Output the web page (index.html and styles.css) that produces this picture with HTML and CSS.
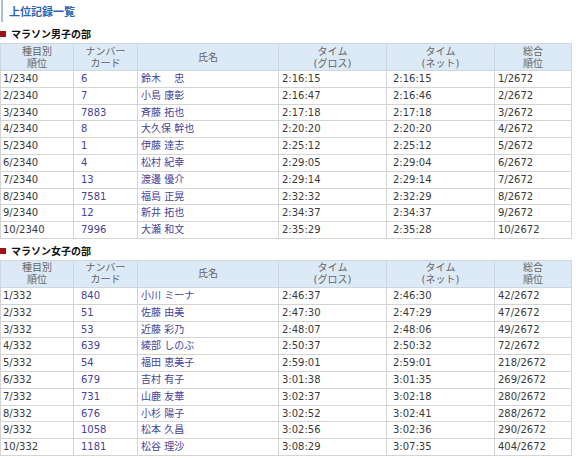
FILE: index.html
```html
<!DOCTYPE html>
<html lang="ja">
<head>
<meta charset="utf-8">
<title>上位記録一覧</title>
<link rel="stylesheet" href="styles.css">
</head>
<body>
<h1 class="page-title">上位記録一覧</h1>

<h2 class="section-title">マラソン男子の部</h2>
<table class="rank">
<colgroup><col class="c1"><col class="c2"><col class="c3"><col class="c4"><col class="c5"><col class="c6"></colgroup>
<thead>
<tr><th>種目別<br>順位</th><th>ナンバー<br>カード</th><th>氏名</th><th>タイム<br>(グロス)</th><th>タイム<br>(ネット)</th><th>総合<br>順位</th></tr>
</thead>
<tbody>
<tr><td>1/2340</td><td class="lnk">6</td><td class="lnk">鈴木　 忠</td><td>2:16:15</td><td>2:16:15</td><td>1/2672</td></tr>
<tr><td>2/2340</td><td class="lnk">7</td><td class="lnk">小島 康彰</td><td>2:16:47</td><td>2:16:46</td><td>2/2672</td></tr>
<tr><td>3/2340</td><td class="lnk">7883</td><td class="lnk">斉藤 拓也</td><td>2:17:18</td><td>2:17:18</td><td>3/2672</td></tr>
<tr><td>4/2340</td><td class="lnk">8</td><td class="lnk">大久保 幹也</td><td>2:20:20</td><td>2:20:20</td><td>4/2672</td></tr>
<tr><td>5/2340</td><td class="lnk">1</td><td class="lnk">伊藤 達志</td><td>2:25:12</td><td>2:25:12</td><td>5/2672</td></tr>
<tr><td>6/2340</td><td class="lnk">4</td><td class="lnk">松村 紀幸</td><td>2:29:05</td><td>2:29:04</td><td>6/2672</td></tr>
<tr><td>7/2340</td><td class="lnk">13</td><td class="lnk">渡邊 優介</td><td>2:29:14</td><td>2:29:14</td><td>7/2672</td></tr>
<tr><td>8/2340</td><td class="lnk">7581</td><td class="lnk">福島 正晃</td><td>2:32:32</td><td>2:32:29</td><td>8/2672</td></tr>
<tr><td>9/2340</td><td class="lnk">12</td><td class="lnk">新井 拓也</td><td>2:34:37</td><td>2:34:37</td><td>9/2672</td></tr>
<tr><td>10/2340</td><td class="lnk">7996</td><td class="lnk">大瀬 和文</td><td>2:35:29</td><td>2:35:28</td><td>10/2672</td></tr>
</tbody>
</table>

<h2 class="section-title">マラソン女子の部</h2>
<table class="rank">
<colgroup><col class="c1"><col class="c2"><col class="c3"><col class="c4"><col class="c5"><col class="c6"></colgroup>
<thead>
<tr><th>種目別<br>順位</th><th>ナンバー<br>カード</th><th>氏名</th><th>タイム<br>(グロス)</th><th>タイム<br>(ネット)</th><th>総合<br>順位</th></tr>
</thead>
<tbody>
<tr><td>1/332</td><td class="lnk">840</td><td class="lnk">小川 ミーナ</td><td>2:46:37</td><td>2:46:30</td><td>42/2672</td></tr>
<tr><td>2/332</td><td class="lnk">51</td><td class="lnk">佐藤 由美</td><td>2:47:30</td><td>2:47:29</td><td>47/2672</td></tr>
<tr><td>3/332</td><td class="lnk">53</td><td class="lnk">近藤 彩乃</td><td>2:48:07</td><td>2:48:06</td><td>49/2672</td></tr>
<tr><td>4/332</td><td class="lnk">639</td><td class="lnk">綾部 しのぶ</td><td>2:50:37</td><td>2:50:32</td><td>72/2672</td></tr>
<tr><td>5/332</td><td class="lnk">54</td><td class="lnk">福田 恵美子</td><td>2:59:01</td><td>2:59:01</td><td>218/2672</td></tr>
<tr><td>6/332</td><td class="lnk">679</td><td class="lnk">吉村 有子</td><td>3:01:38</td><td>3:01:35</td><td>269/2672</td></tr>
<tr><td>7/332</td><td class="lnk">731</td><td class="lnk">山鹿 友華</td><td>3:02:37</td><td>3:02:18</td><td>280/2672</td></tr>
<tr><td>8/332</td><td class="lnk">676</td><td class="lnk">小杉 陽子</td><td>3:02:52</td><td>3:02:41</td><td>288/2672</td></tr>
<tr><td>9/332</td><td class="lnk">1058</td><td class="lnk">松本 久昌</td><td>3:02:56</td><td>3:02:36</td><td>290/2672</td></tr>
<tr><td>10/332</td><td class="lnk">1181</td><td class="lnk">松谷 理沙</td><td>3:08:29</td><td>3:07:35</td><td>404/2672</td></tr>
</tbody>
</table>
</body>
</html>
```
FILE: styles.css
```css
html, body {
  margin: 0;
  padding: 0;
  background: #ffffff;
}
body {
  font-family: "DejaVu Sans", Verdana, "Noto Sans CJK JP", sans-serif;
  font-size: 10px;
  color: #333333;
}
.page-title {
  margin: 0 0 0 1px;
  border-left: 2px solid #a9bdd6;
  padding: 4px 0 4px 6px;
  font-family: "Noto Sans CJK JP", sans-serif;
  font-size: 11px;
  line-height: 14px;
  font-weight: bold;
  color: #2a64b4;
}
.section-title {
  display: flex;
  align-items: center;
  gap: 5px;
  margin: 5px 0 2px 0;
  font-family: "Noto Sans CJK JP", sans-serif;
  font-size: 10px;
  line-height: 14px;
  font-weight: bold;
  color: #111111;
}
.section-title::before {
  content: "";
  width: 6px;
  height: 6px;
  background: #a31212;
}
.rank {
  width: 571px;
  table-layout: fixed;
  border-collapse: collapse;
  margin-bottom: 2px;
}
.c1 { width: 73px; }
.c2 { width: 64px; }
.c3 { width: 141px; }
.c4 { width: 108px; }
.c5 { width: 108px; }
.c6 { width: 77px; }
.rank th {
  background: #dce9f7;
  border: 1px solid #cfd6de;
  font-weight: normal;
  color: #666666;
  font-size: 10px;
  line-height: 12px;
  padding: 1px 0 0 0;
  height: 25px;
  text-align: center;
  vertical-align: middle;
}
.rank td {
  border: 1px solid #d4d4d4;
  padding: 1px 0 1px 3px;
  line-height: 13.8px;
  white-space: nowrap;
  text-align: left;
  vertical-align: middle;
  color: #3a3a3a;
}
.rank td:nth-child(1) { padding-left: 2px; }
.rank td:nth-child(2) { padding-left: 7px; }
.rank td:nth-child(4) { padding-left: 3px; }
.rank td:nth-child(5) { padding-left: 6px; }
.rank td:nth-child(6) { padding-left: 3px; }
.rank td.lnk { color: #45439a; }
```
